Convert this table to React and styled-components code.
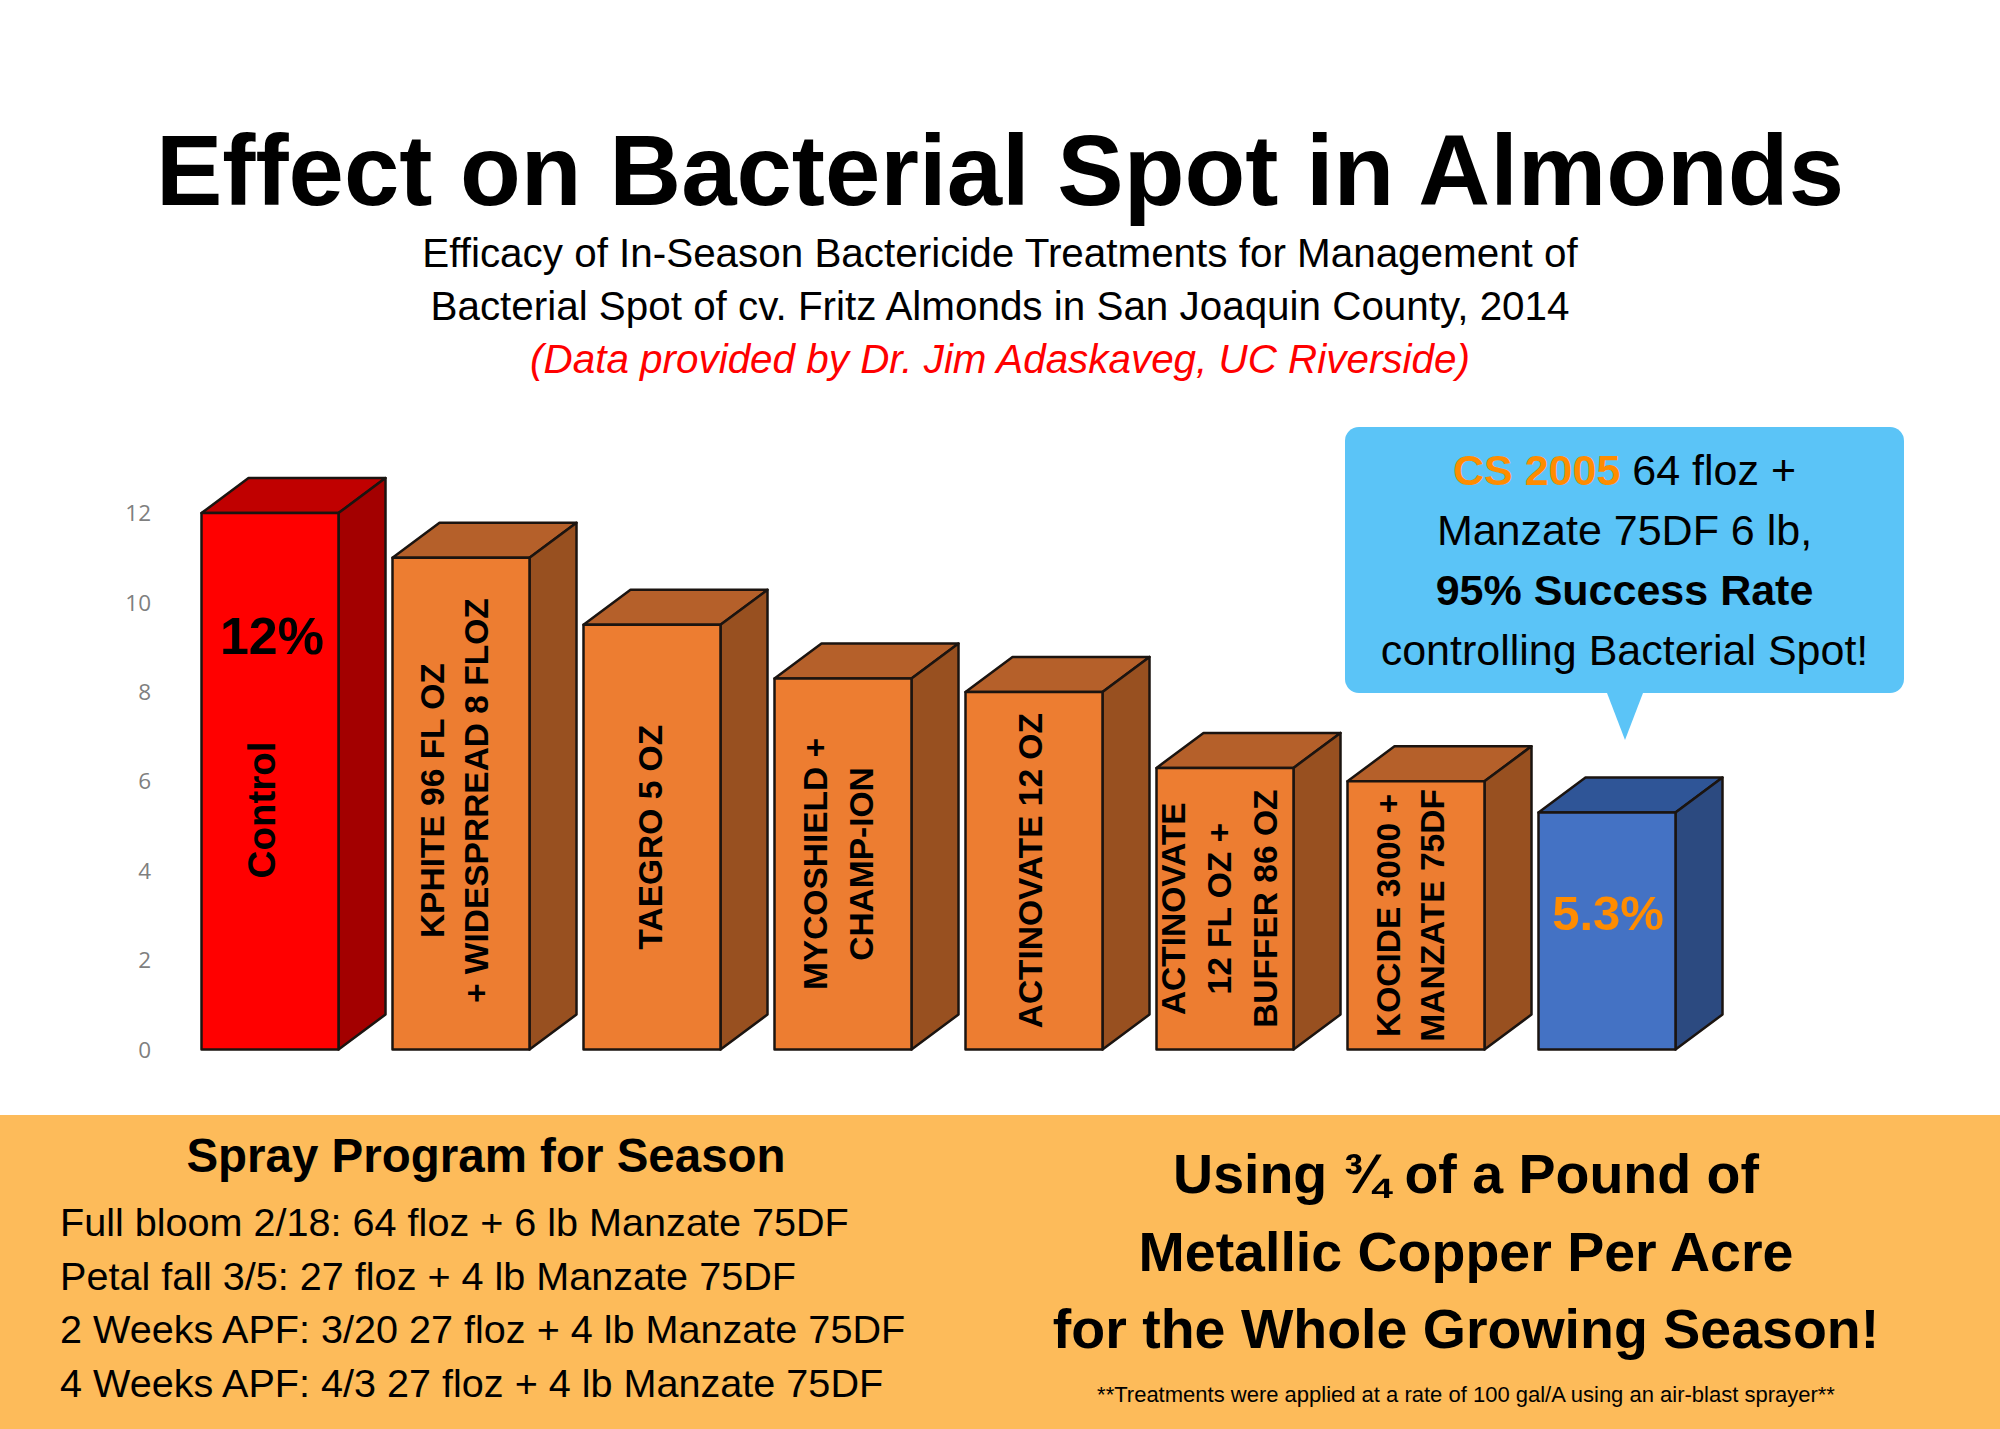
import React from 'react';
import styled, { createGlobalStyle } from 'styled-components';

const GlobalStyle = createGlobalStyle`
  html, body {
    margin: 0;
    padding: 0;
    background: #ffffff;
  }
  body {
    font-family: "Liberation Sans", Arial, sans-serif;
    color: #000;
  }
`;

// chart geometry, in page pixels
const BASE_Y = 1049.5;
const UNIT = 44.7;
const BAR_W = 137;
const PITCH = 191;
const FIRST_X = 201.5;
const DEPTH_X = 47;
const DEPTH_Y = 35;

const palette = {
  red: { front: '#ff0000', top: '#c00000', side: '#a30000' },
  orange: { front: '#ed7d31', top: '#b5602a', side: '#985020' },
  blue: { front: '#4472c4', top: '#2f5597', side: '#2c4a80' },
};

const bars = [
  { value: 12, color: 'red', lines: ['Control'], size: 38.5, cx: 261, cy: 810, gap: 45 },
  { value: 11, color: 'orange', lines: ['KPHITE 96 FL OZ', '+ WIDESPRREAD 8 FLOZ'], dx: -7, dy: -3, gap: 45 },
  { value: 9.5, color: 'orange', lines: ['TAEGRO 5 OZ'], dx: -2 },
  { value: 8.3, color: 'orange', lines: ['MYCOSHIELD +', 'CHAMP-ION'], dx: -5, gap: 46 },
  { value: 8.0, color: 'orange', lines: ['ACTINOVATE 12 OZ'], dx: -4 },
  { value: 6.3, color: 'orange', lines: ['ACTINOVATE', '12 FL OZ +', 'BUFFER 86 OZ'], dx: -6, gap: 46 },
  { value: 6.0, color: 'orange', lines: ['KOCIDE 3000 +', 'MANZATE 75DF'], dx: -6, gap: 44 },
  { value: 5.3, color: 'blue', lines: [] },
];

const ticks = [0, 2, 4, 6, 8, 10, 12];

const Bar = ({ index, bar }) => {
  const x = FIRST_X + index * PITCH;
  const top = BASE_Y - bar.value * UNIT;
  const c = palette[bar.color];
  const size = bar.size || 33.5;
  const gap = bar.gap || 45;
  const cx = bar.cx || x + BAR_W / 2 + (bar.dx || 0);
  const cy = bar.cy || (top + BASE_Y) / 2 + (bar.dy || 0);
  const n = bar.lines.length;

  return (
    <g>
      <polygon
        className="face"
        fill={c.top}
        points={`${x},${top} ${x + DEPTH_X},${top - DEPTH_Y} ${x + BAR_W + DEPTH_X},${top - DEPTH_Y} ${x + BAR_W},${top}`}
      />
      <polygon
        className="face"
        fill={c.side}
        points={`${x + BAR_W},${top} ${x + BAR_W + DEPTH_X},${top - DEPTH_Y} ${x + BAR_W + DEPTH_X},${BASE_Y - DEPTH_Y} ${x + BAR_W},${BASE_Y}`}
      />
      <rect className="face" x={x} y={top} width={BAR_W} height={BASE_Y - top} fill={c.front} />
      {n > 0 && (
        <g transform={`translate(${cx} ${cy}) rotate(-90)`}>
          <text className="label" textAnchor="middle" fontSize={size}>
            {bar.lines.map((line, i) => (
              <tspan key={line} x="0" y={(i - (n - 1) / 2) * gap + size * 0.358}>
                {line}
              </tspan>
            ))}
          </text>
        </g>
      )}
    </g>
  );
};

const BarChart = () => (
  <ChartSvg viewBox="0 386 2000 729" width="2000" height="729">
    {ticks.map((t) => (
      <text key={t} className="tick" x="151" y={BASE_Y - t * UNIT + 8} textAnchor="end">
        {t}
      </text>
    ))}
    {bars.map((bar, i) => (
      <Bar key={i} index={i} bar={bar} />
    ))}
    <text className="value" x={FIRST_X + BAR_W / 2 + 2} y={654} textAnchor="middle" fontSize="52">
      12%
    </text>
    <text className="value orange" x={FIRST_X + 7 * PITCH + BAR_W / 2 + 1} y={930} textAnchor="middle" fontSize="49">
      5.3%
    </text>
  </ChartSvg>
);

const App = () => (
  <Page>
    <GlobalStyle />
    <Header>
      <Title>Effect on Bacterial Spot in Almonds</Title>
      <Subtitle>Efficacy of In-Season Bactericide Treatments for Management of</Subtitle>
      <Subtitle>Bacterial Spot of cv. Fritz Almonds in San Joaquin County, 2014</Subtitle>
      <Credit>(Data provided by Dr. Jim Adaskaveg, UC Riverside)</Credit>
    </Header>

    <ChartArea>
      <BarChart />
      <Callout>
        <div>
          <Highlight>CS 2005</Highlight> 64 floz +
        </div>
        <div>Manzate 75DF 6 lb,</div>
        <div>
          <strong>95% Success Rate</strong>
        </div>
        <div>controlling Bacterial Spot!</div>
      </Callout>
    </ChartArea>

    <Band>
      <ProgramColumn>
        <ProgramTitle>Spray Program for Season</ProgramTitle>
        <ProgramList>
          <li>Full bloom 2/18: 64 floz + 6 lb Manzate 75DF</li>
          <li>Petal fall 3/5: 27 floz + 4 lb Manzate 75DF</li>
          <li>2 Weeks APF: 3/20 27 floz + 4 lb Manzate 75DF</li>
          <li>4 Weeks APF: 4/3 27 floz + 4 lb Manzate 75DF</li>
        </ProgramList>
      </ProgramColumn>
      <SummaryColumn>
        <Summary>
          Using ¾ of a Pound of
          <br />
          Metallic Copper Per Acre
          <br />
          for the Whole Growing Season!
        </Summary>
        <Footnote>**Treatments were applied at a rate of 100 gal/A using an air-blast sprayer**</Footnote>
      </SummaryColumn>
    </Band>
  </Page>
);

const Page = styled.div`
  width: 2000px;
  height: 1429px;
  overflow: hidden;
  display: flex;
  flex-direction: column;
  background: #fff;
`;

const Header = styled.header`
  padding-top: 115px;
  text-align: center;
  height: 271px;
`;

const Title = styled.h1`
  margin: 0;
  font-size: 99.5px;
  line-height: 112px;
  font-weight: 700;
`;

const Subtitle = styled.p`
  margin: 0;
  font-size: 40.4px;
  line-height: 53px;
`;

const Credit = styled(Subtitle)`
  color: #ff0000;
  font-style: italic;
`;

const ChartArea = styled.section`
  position: relative;
  height: 729px;
  flex-shrink: 0;
`;

const ChartSvg = styled.svg`
  display: block;

  text {
    font-family: "Liberation Sans", Arial, sans-serif;
  }

  .face {
    stroke: #1b1410;
    stroke-width: 2.5;
    stroke-linejoin: round;
  }

  .tick {
    font-family: "Open Sans", "Liberation Sans", sans-serif;
    font-size: 22.5px;
    fill: #7f7f7f;
  }

  .label,
  .value {
    font-weight: 700;
    fill: #000;
  }

  .orange {
    fill: #ff8c00;
  }
`;

const Callout = styled.div`
  position: absolute;
  left: 1345px;
  top: 41px;
  width: 559px;
  height: 266px;
  box-sizing: border-box;
  padding-top: 13px;
  background: #5bc4f7;
  border-radius: 14px;
  text-align: center;
  font-size: 43px;
  line-height: 60px;

  strong {
    font-weight: 700;
  }

  &::after {
    content: '';
    position: absolute;
    top: 100%;
    left: 262px;
    border-left: 18px solid transparent;
    border-right: 18px solid transparent;
    border-top: 47px solid #5bc4f7;
  }
`;

const Highlight = styled.span`
  color: #ff8c00;
  font-weight: 700;
`;

const Band = styled.section`
  flex: 1;
  background: #fdbb5a;
  display: grid;
  grid-template-columns: 972px 1fr;
`;

const ProgramColumn = styled.div`
  padding-top: 13px;
`;

const ProgramTitle = styled.h2`
  margin: 0;
  text-align: center;
  font-size: 47.5px;
  line-height: 56px;
  font-weight: 700;
`;

const ProgramList = styled.ul`
  list-style: none;
  margin: 12px 0 0;
  padding: 0 0 0 60px;
  font-size: 39.6px;
  line-height: 53.7px;
`;

const SummaryColumn = styled.div`
  padding: 21px 40px 0 0;
  text-align: center;
`;

const Summary = styled.p`
  margin: 0;
  font-size: 55.5px;
  line-height: 77.6px;
  font-weight: 700;
`;

const Footnote = styled.p`
  margin: 13px 0 0;
  font-size: 22px;
  line-height: 26px;
`;

export default App;
